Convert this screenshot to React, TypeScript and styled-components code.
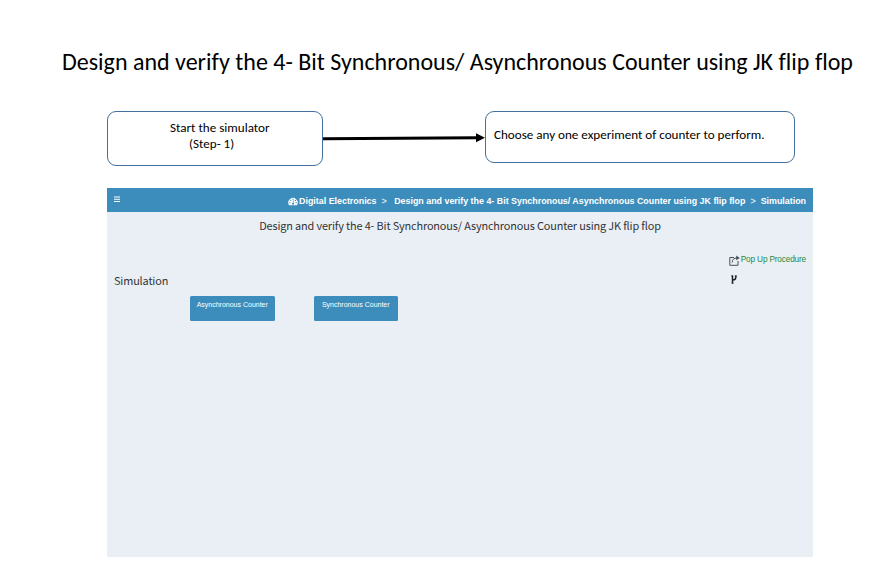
import React from 'react';
import styled, { createGlobalStyle } from 'styled-components';

const Global = createGlobalStyle`
  * { box-sizing: border-box; }
  body { margin: 0; background: #fff; }
`;

const slideFont = `Carlito, Lato, 'Noto Sans', sans-serif`;
const humanist = `'Noto Sans CJK SC', 'Noto Sans', sans-serif`;
const grotesque = `'Liberation Sans', Arial, sans-serif`;

const Slide = styled.main`
  display: flow-root;
  width: 884px;
  height: 569px;
  overflow: hidden;
  background: #fff;
  color: #000;
  font-family: ${slideFont};
  font-variant-ligatures: none;
`;

const Title = styled.h1`
  margin: 45px 0 0 62px;
  height: 34px;
  font-size: 24px;
  line-height: 34px;
  font-weight: 400;
  white-space: nowrap;
`;

const Flow = styled.section`
  display: flex;
  align-items: flex-start;
  margin: 32px 0 0 107px;
  height: 55px;
`;

const Step = styled.div<{ $w: number; $h: number }>`
  flex: none;
  width: ${(p) => p.$w}px;
  height: ${(p) => p.$h}px;
  border: 1px solid #41719c;
  border-radius: 9px;
  font-size: 13.1px;
  line-height: 16px;
  white-space: nowrap;
`;

const StartLine = styled.div<{ $indent: number }>`
  padding-left: ${(p) => p.$indent}px;
`;

const StartStep = styled(Step)`
  padding-top: 8px;
`;

const ChooseStep = styled(Step)`
  padding: 15px 0 0 8px;
`;

const Arrow = styled.svg`
  flex: none;
  display: block;
`;

const Simulator = styled.section`
  width: 706px;
  height: 369px;
  margin: 22px 0 0 107px;
  background: #e9eff5;
  color: #333;
  font-family: ${humanist};
`;

const Bar = styled.header`
  display: flex;
  align-items: center;
  height: 24px;
  padding: 2px 7px 0 7px;
  background: #3c8dbc;
  color: #fff;
  font: bold 8.9px/22px ${grotesque};
  white-space: nowrap;
`;

const MenuIcon = styled.svg`
  margin: 0 auto 3px 0;
`;

const Separator = styled.span<{ $left: number; $right: number }>`
  margin: 0 ${(p) => p.$right}px 0 ${(p) => p.$left}px;
  color: #d5e6f1;
`;

const Gauge = styled.svg`
  margin-right: 1.5px;
`;

const PageTitle = styled.h2`
  margin: 3px 0 0;
  font-size: 10.9px;
  line-height: 20px;
  font-weight: 400;
  letter-spacing: -0.14px;
  text-align: center;
  white-space: nowrap;
`;

const PopupLink = styled.a`
  display: flex;
  align-items: center;
  justify-content: flex-end;
  height: 14px;
  margin-top: 17px;
  padding-right: 7px;
  gap: 1px;
  color: #2a8a3c;
  font: 8.3px/14px ${grotesque};
  letter-spacing: -0.19px;
  white-space: nowrap;
`;

const PopupIcon = styled.svg`
  margin-top: 2px;
`;

const SimulationRow = styled.div`
  display: flex;
  justify-content: space-between;
  height: 20px;
  margin-top: 5px;
  padding: 0 76px 0 7px;
`;

const SimulationTitle = styled.h3`
  margin: -1px 0 0;
  font-size: 10.9px;
  line-height: 20px;
  font-weight: 400;
  letter-spacing: -0.14px;
`;

const ForkIcon = styled.svg`
  margin-top: 4px;
`;

const Actions = styled.div`
  display: flex;
  gap: 39px;
  margin: 5px 0 0 83px;
`;

const Action = styled.button`
  width: 84.5px;
  height: 25px;
  padding: 0 0 8px;
  border: 0;
  border-radius: 1.5px;
  background: #3c8dbc;
  color: #fff;
  font: 7px/16px ${grotesque};
  white-space: nowrap;
`;

export default function App() {
  return (
    <Slide>
      <Global />
      <Title>Design and verify the 4- Bit Synchronous/ Asynchronous Counter using JK flip flop</Title>
      <Flow>
        <StartStep $w={216} $h={55}>
          <StartLine $indent={62}>Start the simulator</StartLine>
          <StartLine $indent={81}>(Step- 1)</StartLine>
        </StartStep>
        <Arrow width="162" height="55" viewBox="0 0 162 55">
          <path d="M0 27.7L155 26.7" stroke="#000" strokeWidth="3" />
          <path d="M153 22.2L162 26.7L153 31.2Z" />
        </Arrow>
        <ChooseStep $w={310} $h={52}>Choose any one experiment of counter to perform.</ChooseStep>
      </Flow>
      <Simulator>
        <Bar>
          <MenuIcon width="6" height="7" viewBox="0 0 6 7">
            <path d="M0 1H6M0 3.25H6M0 5.5H6" stroke="#fff" strokeWidth="1.2" />
          </MenuIcon>
          <Gauge width="10" height="9" viewBox="0 0 10 9">
            <path d="M1.1 8.3A4.7 4.7 0 1 1 8.9 8.3Z" fill="#fff" />
            <g fill="#3c8dbc">
              <circle cx="1.9" cy="5.7" r=".65" />
              <circle cx="2.8" cy="3.3" r=".65" />
              <circle cx="5" cy="2.2" r=".65" />
              <circle cx="7.5" cy="3.4" r=".65" />
              <circle cx="8.2" cy="5.7" r=".65" />
            </g>
            <path d="M5.7 3.5L5 6.4" stroke="#3c8dbc" strokeWidth=".7" />
            <circle cx="5" cy="6.7" r="1" fill="#3c8dbc" />
          </Gauge>
          <span>Digital Electronics</span>
          <Separator $left={5} $right={7.5}>&gt;</Separator>
          <span>Design and verify the 4- Bit Synchronous/ Asynchronous Counter using JK flip flop</span>
          <Separator $left={5} $right={5}>&gt;</Separator>
          <span>Simulation</span>
        </Bar>
        <PageTitle>Design and verify the 4- Bit Synchronous/ Asynchronous Counter using JK flip flop</PageTitle>
        <PopupLink>
          <PopupIcon width="11" height="11" viewBox="0 0 11 11" fill="none" stroke="#4a4e58">
            <path d="M5 2.5H.8V10.3H9V6" />
            <path d="M3.2 7.5C3.2 4.5 5 3 8 3" />
            <path d="M7.2 .4L10.7 2.9L7.2 5.2Z" fill="#4a4e58" stroke="none" />
          </PopupIcon>
          Pop Up Procedure
        </PopupLink>
        <SimulationRow>
          <SimulationTitle>Simulation</SimulationTitle>
          <ForkIcon width="6" height="9" viewBox="0 0 6 9" fill="none" stroke="#222">
            <path d="M1.5 .5V8.5" strokeWidth="1.5" />
            <path d="M4.8 .5V2.4C4.8 4.2 3.6 4.9 1.7 5" strokeWidth="1.4" />
            <path d="M0 1H2M3.8 1H6M.6 8.2H2.5" strokeWidth=".8" />
          </ForkIcon>
        </SimulationRow>
        <Actions>
          <Action>Asynchronous Counter</Action>
          <Action>Synchronous Counter</Action>
        </Actions>
      </Simulator>
    </Slide>
  );
}
